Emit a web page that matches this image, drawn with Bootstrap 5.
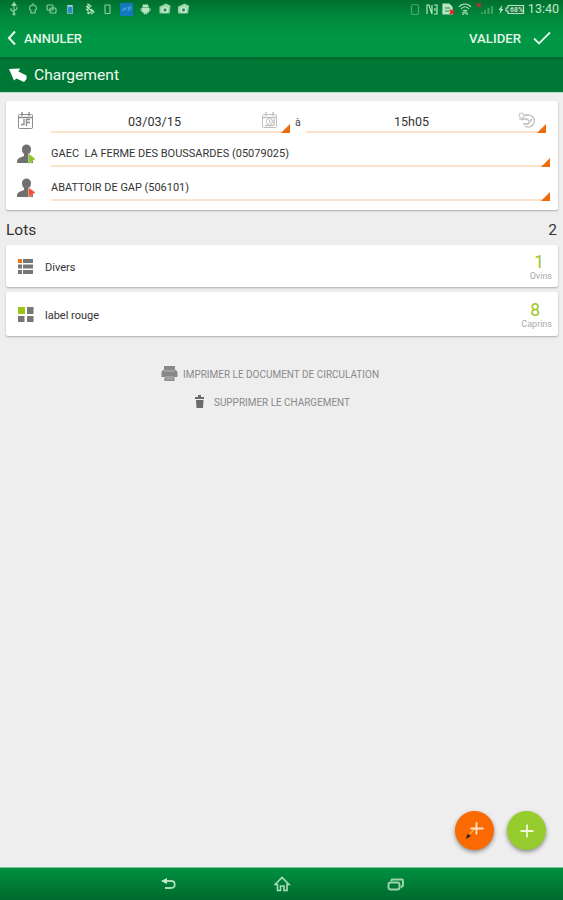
<!DOCTYPE html>
<html lang="fr">
<head>
<meta charset="utf-8">
<meta name="viewport" content="width=device-width, initial-scale=1">
<title>Chargement</title>
<link href="https://cdn.jsdelivr.net/npm/bootstrap@5.3.0/dist/css/bootstrap.min.css" rel="stylesheet">
<style>
body{font-family:Roboto,"Liberation Sans",sans-serif;background:#eee;color:#333;width:563px;height:900px;overflow:hidden;line-height:1}
svg{display:block;flex:none}
.topzone{background:linear-gradient(#00702f 0,#008a3d 18px,#009746 38px,#009443 57px);height:57px}
.statusbar{height:19px;padding:0 4px 0 5px;color:#c4e8cd}
.clock{font-size:12.5px;width:32px;text-align:right;white-space:nowrap;color:#c4e8cd}
.actionbar{height:38px;padding:0 12px 0 7px;color:#e4f6e8;font-size:13px;font-weight:500}
.titlebar{height:36px;background:linear-gradient(#006a2e,#007835 5px,#007835);border-bottom:1px solid #b8dec5;padding:0 9px;color:#eefaf0;font-size:15.5px}
.panel{background:#fff;border-radius:2px;box-shadow:0 1px 2px rgba(0,0,0,.28);margin:0 5px 0 6px}
.form-panel{margin-top:8px;height:109px;padding:7px 8px 0 11px}
.line{height:34px}
.lead-ico{width:18px;margin-right:16px}
.field{border-bottom:2px solid #fbe2cb;position:relative;font-size:11px;color:#333}
.field::after{content:"";position:absolute;right:0;bottom:-2px;border-left:9px solid transparent;border-bottom:9px solid #ed6b0b}
.datef{height:25px;font-size:12.5px}
.partyf{height:25px;padding-bottom:1px}
.lots-head{font-size:15.5px;height:35px;padding:6px 6px 0 6px}
.lot{height:42px;padding:2px 6px 0 12px;font-size:11px}
.lot + .lot{margin-top:5px;height:44px}
.count{color:#9cc51f;font-size:17.5px;line-height:18px;padding-right:8px}
.kind{color:#aaa;font-size:9px;line-height:11px}
.links{color:#8a8a8a;font-size:10px;padding-top:24px}
.fabs{gap:13px;margin:0 17px 17px 0}
.fab{width:39px;height:39px;box-shadow:0 2px 4px rgba(0,0,0,.42)}
.fab-orange{background:#fb6902}
.fab-green{background:#96cc2d}
.sysnav{height:33px;background:linear-gradient(#009040,#006a2d);border-top:1px solid #77c391;padding:0 158px 0 160px}
</style>
<script src="https://cdn.jsdelivr.net/npm/bootstrap@5.3.0/dist/js/bootstrap.bundle.min.js"></script>
</head>
<body class="d-flex flex-column m-0">
<header>
<div class="topzone">
 <div class="statusbar d-flex align-items-center justify-content-between">
  <svg width="190" height="19" viewBox="5 0 190 19" fill="none" stroke="#8fd0a4" stroke-width="1.1">
   <path d="M14 14V5M11 8v2l3 2M17 7v2l-3 2"/><path d="M12 5.500l2-3 2 3z" fill="#b9e5c4"/><circle cx="14" cy="14" r="1"/>
   <path d="M31 11c-3-3-1-6 2-6s5 3 2 6v2h-4zM33 3v2"/>
   <rect x="47" y="5" width="6" height="5" rx="1"/><rect x="50" y="8" width="6" height="5" rx="1"/>
   <rect x="67.500" y="5.500" width="5" height="8" fill="#3185cf" stroke="#65bba5"/><path d="M68 6h4" stroke="#d5f0dd"/>
   <path d="M88 14V4l3 2-5 4M86 6l6 5-4 3M91 9l3 3-3 2" stroke="#b9e5c4"/>
   <rect x="105" y="5" width="5" height="8.500" rx=".5"/>
   <rect x="120" y="3" width="13" height="13" fill="#1478bf" stroke="none"/><path d="M122 11l2-3 1 2 2-3M128 11l1-4h2l-1 3" stroke="#4ba4dc"/>
   <g fill="#b9e5c4" stroke="#b9e5c4" stroke-width=".7"><path d="M142 8h7v4h-2v2h-1v-2h-1v2h-1v-2h-2zM142.500 7c0-3 6-3 6 0zM143 4l1 1M148 4l-1 1M141 8v3M150 8v3"/></g>
   <g id="p"><path d="M160 7l6-3 4 2-1 7h-9z" fill="#a4dbb2"/><circle cx="165" cy="10" r="2.300" fill="#31905a" stroke="#d9f1de"/></g>
   <use href="#p" x="18.500"/>
  </svg>
  <div class="d-flex align-items-center">
   <svg width="120" height="19" viewBox="405 0 120 19" fill="none" stroke="#b9e5c4" stroke-width="1.200">
    <rect x="409.500" y="4.500" width="7" height="10" rx="2" stroke="#4aa86b"/>
    <path d="M425 14V5h2l3 9V5M432 5h3v9h-3M433 8v3"/>
    <path d="M441 4h6l3 3v7h-9z" fill="#b9e5c4"/><path d="M443 8h5M443 11h4" stroke="#278250"/><path d="M448 10l4 4M452 10l-4 4" stroke="#d52b2b" stroke-width="2"/>
    <path d="M457 7c3-4 9-4 12 0M459 9c2-3 6-3 8 0M461 11c1-1 3-1 4 0"/><path d="M461 12v3M465 15v-3M463 11v3"/>
    <path d="M475 3l4 4M479 3l-4 4" stroke="#c82c2c" stroke-width="1.500"/><path d="M480 14v-2M483 14v-4M486.500 14V8M490 14V6" stroke="#3fa461" stroke-width="2"/>
    <path d="M500.500 5l-4 5h2l-1 4 4-5h-2z" fill="#b9e5c4" stroke="none"/>
    <path d="M504 8h2V5.500h15.500v8H506V11h-2z" fill="#17713c"/><text x="508" y="12.300" font-size="7.500" font-weight="bold" fill="#b9e5c4" stroke="none" textLength="13" lengthAdjust="spacingAndGlyphs">68%</text>
   </svg><span class="clock">13:40</span>
  </div>
 </div>
 <div class="actionbar d-flex align-items-center justify-content-between">
  <div class="d-flex align-items-center"><svg width="17" height="16" fill="none" stroke="#e4f6e8" stroke-width="2.100"><path d="M8 1.500L2 8l6 6.500"/></svg><svg width="60" height="16"><text x="0" y="12.500" fill="#e4f6e8" textLength="58" lengthAdjust="spacingAndGlyphs">ANNULER</text></svg></div>
  <div class="d-flex align-items-center"><svg width="64" height="16"><text x="0" y="12.500" fill="#e4f6e8" textLength="52" lengthAdjust="spacingAndGlyphs">VALIDER</text></svg><svg width="18" height="16" fill="none" stroke="#e4f6e8" stroke-width="1.800"><path d="M1 8.500l5 5L17 2.500"/></svg></div>
 </div>
</div>
<div class="titlebar d-flex align-items-center">
 <svg width="25" height="18"><path d="M0 3l11-.5-1.500 3 8 4v3.500L15 16l-7.500-3.500L5 14.500z" fill="#fff"/></svg>
 <svg width="90" height="22"><text x="0" y="15.500" fill="#eefaf0" textLength="85" lengthAdjust="spacingAndGlyphs">Chargement</text></svg>
</div>
</header>
<main class="d-flex flex-column flex-grow-1">
<section class="panel form-panel">
 <div class="line d-flex">
  <svg class="lead-ico" height="25" viewBox="0 0 18 25" fill="none" stroke="#8c8c8c"><rect x="1.500" y="6.500" width="14" height="14" rx="1"/><path d="M1.500 9.500h14M5 4v4M12 4v4" stroke-width="1.400"/><path d="M4 16.500h3V11M9.500 18v-6.500H13M9.500 14.500H13" stroke-width="1.300"/></svg>
  <div class="field datef d-flex align-items-center" style="width:239px">
   <svg width="239" height="23" fill="none" stroke="#c0c0c0"><text x="77" y="17.500" fill="#333" stroke="none" textLength="53" lengthAdjust="spacingAndGlyphs">03/03/15</text><rect x="211.500" y="6.500" width="14" height="13" rx="1"/><path d="M211 9.500h15M215 4v4M222 4v4M214 17.500h8M223 11v7" stroke-width="1.400"/><circle cx="218.500" cy="13.500" r="3"/><path d="M218.500 12v2h2"/></svg>
  </div>
  <svg width="16" height="24"><text x="5" y="17.500" font-size="10.500" fill="#444">à</text></svg>
  <div class="field datef d-flex align-items-center" style="width:240px">
   <svg width="240" height="23" fill="none" stroke="#bdbdbd"><text x="88" y="17.500" fill="#333" stroke="none" textLength="35" lengthAdjust="spacingAndGlyphs">15h05</text><path d="M219 8a6 6 0 1 1 0 10M217 16h5l4-5M216 11h5l2 2" stroke-width="1.300"/><circle cx="215.500" cy="7.500" r="2.500"/><path d="M218 7h5M213 11l4 1" /></svg>
  </div>
 </div>
 <div class="line d-flex">
  <svg class="lead-ico" height="26" viewBox="0 0 18 26"><path d="M5 7c0-6 9-6 9 0 0 3-1 4-2 5v2l4 2v5H0c0-5 2-5 7-7v-2c-1-1-2-2-2-5z" fill="#707070"/><path d="M11.500 11.500l7 5.500-7 5z" fill="#8fc42a" stroke="#d8e7bc" stroke-width=".6"/></svg>
  <div class="field partyf flex-grow-1 d-flex align-items-center"><svg width="242" height="18"><text x="0" y="12.500" fill="#333" textLength="238" lengthAdjust="spacingAndGlyphs" xml:space="preserve">GAEC  LA FERME DES BOUSSARDES (05079025)</text></svg></div>
 </div>
 <div class="line d-flex">
  <svg class="lead-ico" height="26" viewBox="0 0 18 26"><path d="M5 7c0-6 9-6 9 0 0 3-1 4-2 5v2l4 2v5H0c0-5 2-5 7-7v-2c-1-1-2-2-2-5z" fill="#707070"/><path d="M11.500 11.500l7 5-7 5z" fill="#f4502f" stroke="#f4d2c7" stroke-width=".6"/></svg>
  <div class="field partyf flex-grow-1 d-flex align-items-center"><svg width="142" height="18"><text x="0" y="12.500" fill="#333" textLength="138" lengthAdjust="spacingAndGlyphs">ABATTOIR DE GAP (506101)</text></svg></div>
 </div>
</section>
<div class="lots-head d-flex align-items-center justify-content-between"><span>Lots</span><span>2</span></div>
<div class="panel lot d-flex align-items-center">
 <svg width="27" height="16" fill="#777"><path d="M0 0h4v4H0z" fill="#ed7410"/><path d="M5 0h10v4H5zM0 5.500h4v4H0zM5 5.500h10v4H5zM0 11h4v4H0zM5 11h10v4H5z"/></svg>
 <span>Divers</span>
 <div class="ms-auto text-end"><div class="count">1</div><div class="kind">Ovins</div></div>
</div>
<div class="panel lot d-flex align-items-center">
 <svg width="27" height="16" fill="#777"><path d="M0 0h7v7H0z" fill="#9bc711"/><path d="M9 0h6.500v7H9zM0 9h6.500v6H0zM9 9h6.500v6H9z"/></svg>
 <span>label rouge</span>
 <div class="ms-auto text-end"><div class="count pe-2 me-1">8</div><div class="kind">Caprins</div></div>
</div>
<div class="links d-flex flex-column align-items-center">
 <div class="d-flex align-items-center" style="height:28px;margin-right:22px">
  <svg width="22" height="18" fill="#888"><path d="M3 1h11v4H3zM2 5h13l1.500 2v5h-3v4h-10v-4H.5V7z"/><path d="M3 6h11M4 12h9M5 14h7" stroke="#c8c8c8" stroke-width=".8"/></svg>
  <svg width="197" height="16"><text x="0" y="11.500" fill="#8a8a8a" textLength="196" lengthAdjust="spacingAndGlyphs">IMPRIMER LE DOCUMENT DE CIRCULATION</text></svg>
 </div>
 <div class="d-flex align-items-center" style="height:28px;margin-right:18px">
  <svg width="19" height="16" fill="#6b6b6b"><path d="M0 3h9v2H0zM3 1h3v2H3zM1 6h7.500L8 14H1.500z"/></svg>
  <svg width="137" height="16"><text x="0" y="11.500" fill="#8a8a8a" textLength="136" lengthAdjust="spacingAndGlyphs">SUPPRIMER LE CHARGEMENT</text></svg>
 </div>
</div>
<div class="fabs mt-auto d-flex justify-content-end">
 <div class="fab fab-orange rounded-circle d-flex align-items-center justify-content-center"><svg width="39" height="39" fill="none"><path d="M22 11l-1 5-6 7" stroke="#f7b51f" stroke-width="1.500"/><path d="M21.500 11.500v12M15.500 17.500h13" stroke="#ffe0c8" stroke-width="1.800"/><path d="M11 28l1.500-5 3.500 2z" fill="#242018"/></svg></div>
 <div class="fab fab-green rounded-circle d-flex align-items-center justify-content-center"><svg width="14" height="14" stroke="#edf8d8" stroke-width="1.800"><path d="M7 .5v13M.5 7h13"/></svg></div>
</div>
</main>
<footer class="sysnav d-flex align-items-center justify-content-between">
 <svg width="18" height="16" fill="none" stroke="#a8dcb6" stroke-width="1.800"><path d="M6 5h5c5 0 5 7 0 7H5"/><path d="M1 5l6-3v6z" fill="#c9ecd0" stroke="none"/></svg>
 <svg width="18" height="18" fill="none" stroke="#a8dcb6" stroke-width="1.600"><path d="M1 9.500L8 2.500l7 7h-2V15.500h-3V11H6.500v4.500h-3V9.500z"/></svg>
 <svg width="18" height="16" fill="none" stroke="#a0d3ae" stroke-width="1.900"><rect x="1.500" y="6.500" width="11" height="7" rx="2"/><path d="M4 5l1-1.500h10q1 0 1 1v5l-2 2"/></svg>
</footer>
</body>
</html>
